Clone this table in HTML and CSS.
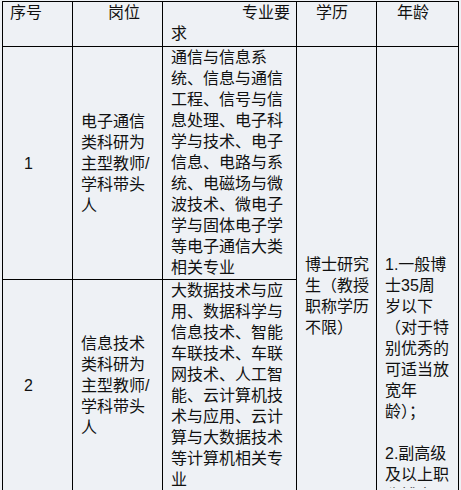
FILE: index.html
```html
<!DOCTYPE html>
<html lang="zh-CN">
<head>
<meta charset="utf-8">
<title>岗位表</title>
<link rel="stylesheet" href="styles.css">
</head>
<body>
<div class="sheet">
  <table class="grid">
    <colgroup>
      <col class="w-no"><col class="w-post"><col class="w-major"><col class="w-edu"><col class="w-age">
    </colgroup>
    <thead>
      <tr class="row-head">
        <th class="h-no">序号</th>
        <th class="h-post">岗位</th>
        <th class="h-major">专业要求</th>
        <th class="h-edu">学历</th>
        <th class="h-age">年龄</th>
      </tr>
    </thead>
    <tbody>
      <tr class="row-a">
        <td class="no">1</td>
        <td class="post">电子通信类科研为主型教师/学科带头人</td>
        <td class="major">通信与信息系统、信息与通信工程、信号与信息处理、电子科学与技术、电子信息、电路与系统、电磁场与微波技术、微电子学与固体电子学等电子通信大类相关专业</td>
        <td class="edu" rowspan="2">博士研究生（教授职称学历不限）</td>
        <td class="age" rowspan="2"><div class="age-clip"><p>1.一般博士35周岁以下（对于特别优秀的可适当放宽年龄）；</p><p>2.副高级及以上职称博士既往业绩突出者可放宽至45周岁</p></div></td>
      </tr>
      <tr class="row-b">
        <td class="no">2</td>
        <td class="post">信息技术类科研为主型教师/学科带头人</td>
        <td class="major">大数据技术与应用、数据科学与信息技术、智能车联技术、车联网技术、人工智能、云计算机技术与应用、云计算与大数据技术等计算机相关专业</td>
      </tr>
    </tbody>
  </table>
</div>
</body>
</html>
```

FILE: styles.css
```css
html, body {
  margin: 0;
  padding: 0;
  background: #eef1f5;
}

.sheet {
  padding: 1px 0 0 2px;
}

.grid {
  border-collapse: collapse;
  table-layout: fixed;
  width: 456px;
  font-family: "Liberation Sans", "Noto Sans CJK SC", sans-serif;
  font-size: 16px;
  line-height: 21px;
  color: #111;
  background: #eef1f5;
}

.w-no { width: 70px; }
.w-post { width: 90px; }
.w-major { width: 134px; }
.w-edu { width: 80px; }
.w-age { width: 82px; }

.grid th,
.grid td {
  border: 1px solid #000;
  padding: 0 8px;
  vertical-align: top;
  font-weight: normal;
  text-align: left;
}

.row-head { height: 45px; }
.row-a { height: 233px; }
.row-b { height: 209px; }

.grid th.h-no { padding-left: 7px; }
.grid th.h-post { padding-left: 35px; }
.grid th.h-major { padding-right: 4px; text-indent: 71px; }
.grid th.h-edu { padding-left: 19px; }
.grid th.h-age { padding-left: 20px; }

.grid td.major {
  padding-right: 4px;
}

.grid td.no {
  padding-left: 21px;
  vertical-align: middle;
}

.grid td.post {
  vertical-align: middle;
}

.grid td.edu {
  padding: 207px 4px 0 8px;
}

.grid td.age {
  padding: 207px 8px 0 8px;
}

.age-clip {
  max-height: 234px;
  overflow: hidden;
}

.age-clip p {
  margin: 0 0 21px;
}
```
